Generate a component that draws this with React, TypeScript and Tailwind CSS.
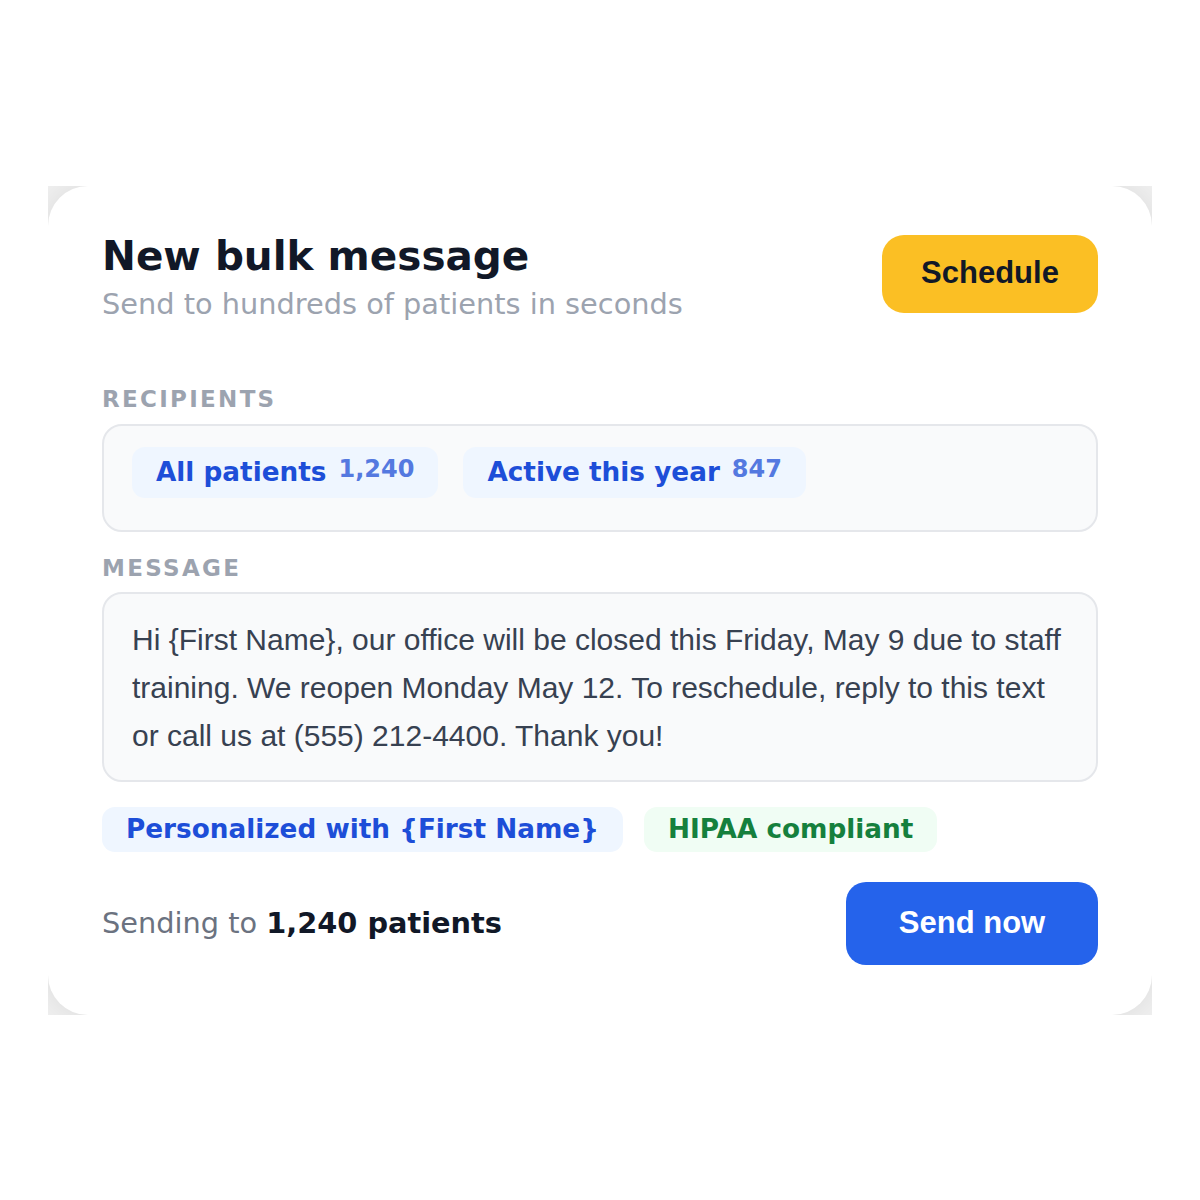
import React from "react";

const dejavu = "font-['DejaVu_Sans',sans-serif]";
const arial = "font-['Liberation_Sans',Arial,sans-serif]";

interface AudienceChipProps {
  label: string;
  count: string;
}

const AudienceChip: React.FC<AudienceChipProps> = ({ label, count }) => (
  <div className="flex items-center gap-[12px] rounded-[13px] bg-[#eff6ff] px-[24px] py-[9px]">
    <span className="text-[26.3px] leading-[31px] font-bold text-[#1d4ed8]">
      {label}
    </span>
    <span className="mb-[6px] text-[24px] leading-[27px] font-bold text-[#5479e0]">
      {count}
    </span>
  </div>
);

export default function App() {
  return (
    <div className="flex min-h-screen items-center justify-center bg-white">
      <div className="w-[1104px] overflow-hidden bg-[#f1f1f1]">
        <div
          className={`${dejavu} rounded-[40px] bg-white px-[54px] pt-[47px] pb-[50px] shadow-[0_0_36px_rgba(0,0,0,0.10)]`}
        >
          {/* header */}
          <div className="flex items-start justify-between">
            <div>
              <h1 className="text-[40.5px] leading-[46px] font-bold text-[#111827]">
                New bulk message
              </h1>
              <p className="mt-[9px] text-[28.8px] leading-[32px] text-[#9ca3af]">
                Send to hundreds of patients in seconds
              </p>
            </div>
            <button
              className={`${arial} mt-[2px] h-[78px] w-[216px] rounded-[22px] bg-[#fbbf24] text-[31px] font-bold text-[#111827]`}
            >
              Schedule
            </button>
          </div>

          {/* recipients */}
          <div className="mt-[65px] text-[23px] leading-[28px] font-bold tracking-[0.1em] text-[#9ca3af]">
            RECIPIENTS
          </div>
          <div className="mt-[11px] flex gap-[25px] rounded-[20px] border-2 border-[#e5e7eb] bg-[#f9fafb] px-[28px] pt-[21px] pb-[32px]">
            <AudienceChip label="All patients" count="1,240" />
            <AudienceChip label="Active this year" count="847" />
          </div>

          {/* message */}
          <div className="mt-[22px] text-[23px] leading-[28px] font-bold tracking-[0.1em] text-[#9ca3af]">
            MESSAGE
          </div>
          <div
            className={`${arial} mt-[10px] rounded-[20px] border-2 border-[#e5e7eb] bg-[#f9fafb] px-[28px] pt-[22px] pb-[20px] text-[30px] leading-[48px] text-[#374151]`}
          >
            Hi {"{First Name}"}, our office will be closed this Friday, May 9
            due to staff training. We reopen Monday May 12. To reschedule,
            reply to this text or call us at (555) 212-4400. Thank you!
          </div>

          {/* tags */}
          <div className="mt-[25px] flex gap-[21px]">
            <span className="rounded-[13px] bg-[#eff6ff] px-[24px] py-[7px] text-[26.3px] leading-[31px] font-bold text-[#1d4ed8]">
              Personalized with {"{First Name}"}
            </span>
            <span className="rounded-[13px] bg-[#f0fdf4] px-[24px] py-[7px] text-[26.3px] leading-[31px] font-bold text-[#15803d]">
              HIPAA compliant
            </span>
          </div>

          {/* footer */}
          <div className="mt-[30px] flex items-center justify-between">
            <p className="text-[28.8px] leading-[32px] text-[#6b7280]">
              Sending to{" "}
              <span className="font-bold text-[#111827]">1,240 patients</span>
            </p>
            <button
              className={`${arial} h-[83px] w-[252px] rounded-[20px] bg-[#2563eb] text-[31px] font-bold text-white`}
            >
              Send now
            </button>
          </div>
        </div>
      </div>
    </div>
  );
}
